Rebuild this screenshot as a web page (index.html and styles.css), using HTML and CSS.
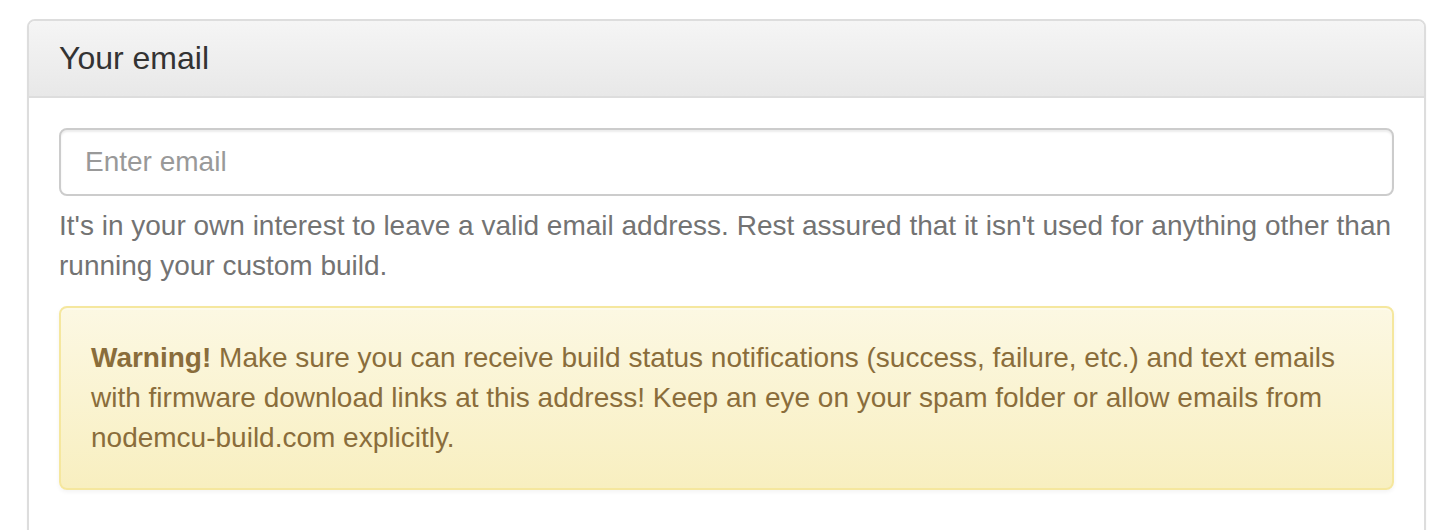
FILE: index.html
```html
<!DOCTYPE html>
<html lang="en">
<head>
<meta charset="utf-8">
<title>Your email</title>
<link rel="stylesheet" href="styles.css">
</head>
<body>
<div class="container">
  <div class="panel">
    <div class="panel-heading">
      <h3 class="panel-title">Your email</h3>
    </div>
    <div class="panel-body">
      <input class="form-control" type="email" placeholder="Enter email">
      <p class="help-block">It's in your own interest to leave a valid email address. Rest assured that it isn't used for anything other than running your custom build.</p>
      <div class="alert-warning">
        <strong>Warning!</strong> Make sure you can receive build status notifications (success, failure, etc.) and text emails with firmware download links at this address! Keep an eye on your spam folder or allow emails from nodemcu-build.com explicitly.
      </div>
    </div>
  </div>
</div>
</body>
</html>
```
FILE: styles.css
```css
* { box-sizing: border-box; }
html, body { margin: 0; padding: 0; background: #fff; }
body {
  font-family: "Liberation Sans", Arial, Helvetica, sans-serif;
  font-size: 28px;
  line-height: 40px;
  color: #333;
}
.container {
  padding: 19px 26px 0 27px;
}
.panel {
  border: 2px solid #ddd;
  border-radius: 8px;
  background: #fff;
  box-shadow: 0 2px 2px rgba(0,0,0,.05);
  min-height: 600px;
}
.panel-heading {
  padding: 20px 30px;
  border-bottom: 2px solid #ddd;
  border-radius: 6px 6px 0 0;
  background-image: linear-gradient(to bottom, #f5f5f5 0%, #e8e8e8 100%);
  color: #333;
}
.panel-title {
  margin: 0;
  font-size: 32px;
  line-height: 1.1;
  font-weight: 500;
  color: #333;
}
.panel-body {
  padding: 30px;
}
.form-control {
  display: block;
  width: 100%;
  height: 68px;
  padding: 12px 24px;
  font-family: inherit;
  font-size: 28px;
  line-height: 40px;
  color: #555;
  background: #fff;
  border: 2px solid #ccc;
  border-radius: 8px;
  box-shadow: inset 0 2px 2px rgba(0,0,0,.075);
  outline: none;
}
.form-control::placeholder { color: #999; }
.help-block {
  margin: 10px 0 20px;
  color: #737373;
}
.alert-warning {
  padding: 30px;
  border: 2px solid #f5e79e;
  border-radius: 8px;
  color: #8a6d3b;
  background-image: linear-gradient(to bottom, #fcf8e3 0%, #f8efc0 100%);
  box-shadow: inset 0 2px 0 rgba(255,255,255,.25), 0 2px 4px rgba(0,0,0,.05);
}
.alert-warning strong { font-weight: bold; }
```
